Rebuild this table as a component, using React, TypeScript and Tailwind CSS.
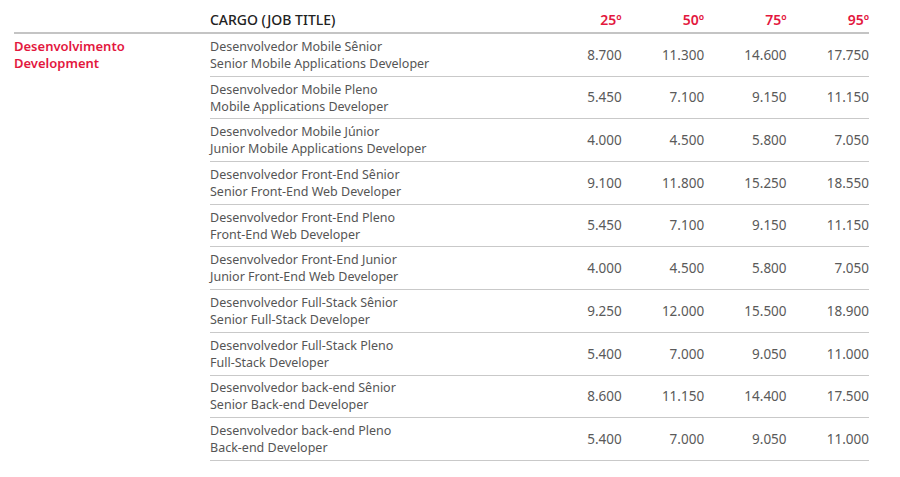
import React from "react";

const rows: [string, string, string[]][] = [
  ["Desenvolvedor Mobile Sênior", "Senior Mobile Applications Developer", ["8.700", "11.300", "14.600", "17.750"]],
  ["Desenvolvedor Mobile Pleno", "Mobile Applications Developer", ["5.450", "7.100", "9.150", "11.150"]],
  ["Desenvolvedor Mobile Júnior", "Junior Mobile Applications Developer", ["4.000", "4.500", "5.800", "7.050"]],
  ["Desenvolvedor Front-End Sênior", "Senior Front-End Web Developer", ["9.100", "11.800", "15.250", "18.550"]],
  ["Desenvolvedor Front-End Pleno", "Front-End Web Developer", ["5.450", "7.100", "9.150", "11.150"]],
  ["Desenvolvedor Front-End Junior", "Junior Front-End Web Developer", ["4.000", "4.500", "5.800", "7.050"]],
  ["Desenvolvedor Full-Stack Sênior", "Senior Full-Stack Developer", ["9.250", "12.000", "15.500", "18.900"]],
  ["Desenvolvedor Full-Stack Pleno", "Full-Stack Developer", ["5.400", "7.000", "9.050", "11.000"]],
  ["Desenvolvedor back-end Sênior", "Senior Back-end Developer", ["8.600", "11.150", "14.400", "17.500"]],
  ["Desenvolvedor back-end Pleno", "Back-end Developer", ["5.400", "7.000", "9.050", "11.000"]],
];

export default function App() {
  return (
    <div
      className="w-[900px] h-[477px] bg-white overflow-hidden"
      style={{ fontFamily: '"Noto Sans", "Liberation Sans", sans-serif' }}
    >
      <div className="ml-[14px] w-[855px]">
        <div className="flex h-[34px] items-center border-b-2 border-[#c4c4c4] pt-[6px]">
          <div className="w-[196px]" />
          <div className="w-[329.5px] text-[14px] font-medium text-[#222]">CARGO (JOB TITLE)</div>
          {["25º", "50º", "75º", "95º"].map((h) => (
            <div key={h} className="w-[82.5px] text-right text-[14px] font-semibold text-[#e3173e]">
              {h}
            </div>
          ))}
        </div>
        <div className="flex">
          <div className="w-[196px] pt-[4px] text-[13px] leading-[17px] font-semibold text-[#e3173e]">
            <div>Desenvolvimento</div>
            <div>Development</div>
          </div>
          <div className="w-[659px]">
            {rows.map(([pt, en, nums]) => (
              <div key={pt} className="flex h-[42.7px] items-center border-b border-[#c9c9c9] text-[#555]">
                <div className="w-[329.5px] text-[12.5px] leading-[17px]">
                  <div>{pt}</div>
                  <div>{en}</div>
                </div>
                {nums.map((n, i) => (
                  <div key={i} className="w-[82.5px] text-right text-[13.5px] text-[#5a5a5a]">
                    {n}
                  </div>
                ))}
              </div>
            ))}
          </div>
        </div>
      </div>
    </div>
  );
}
